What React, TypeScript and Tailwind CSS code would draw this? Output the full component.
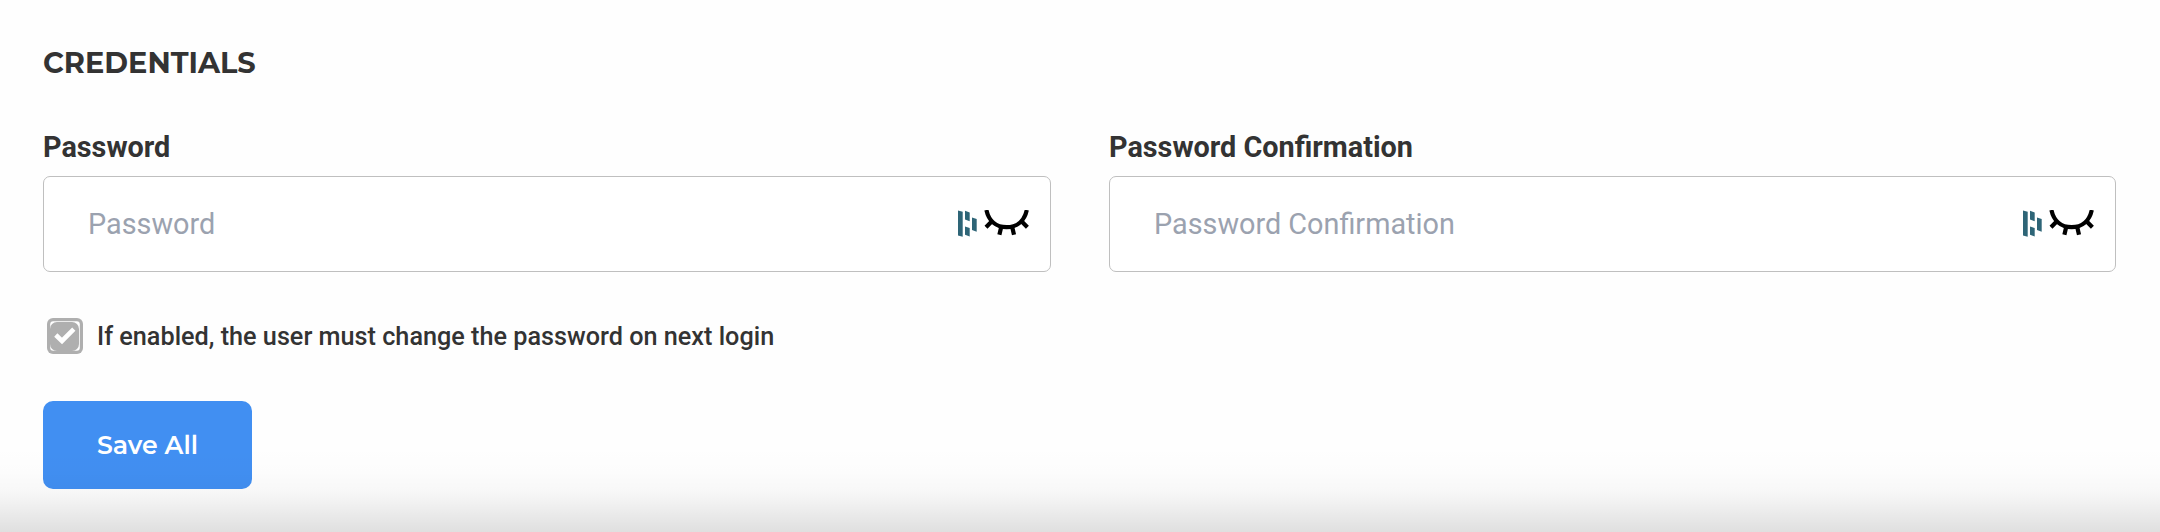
import { useState } from "react";

function StrengthMark() {
  return (
    <svg width="20" height="28" viewBox="0 0 20 28" fill="#2e6577" aria-hidden="true">
      <path d="M0 .4 4.7 1.8v25L0 25.5Z" />
      <path d="M7 .8l4.7 1.8v8.6L7 9.4Z" />
      <path d="M7 16.5l4.7 1.6v8.4L7 24.8Z" />
      <path d="M14 7.5l4.7 1.6v12.7L14 20Z" />
    </svg>
  );
}

function ClosedEye() {
  return (
    <svg width="46" height="28" viewBox="0 0 46 28" fill="none" stroke="#000" strokeWidth="4.2" aria-hidden="true">
      <path d="M3.4 0C5.8 11 13.2 17.2 23.6 17.2S41.4 11 43.8 0" />
      <path d="M9.4 10.8 3 17.2M18.2 17 16.4 24.7M29.2 17 31 24.7M38 10.8 44.4 17.2" />
    </svg>
  );
}

function CheckMark() {
  return (
    <svg width="36" height="36" viewBox="0 0 36 36" fill="none" aria-hidden="true">
      <rect width="36" height="36" rx="6" fill="#afafaf" />
      <rect x="3.2" y="3.2" width="29.6" height="29.6" rx="3" fill="#fff" />
      <rect x="3" y="4" width="29" height="29" rx="7" fill="#afafaf" />
      <path d="M8.8 17 15 23 26.8 11.2" stroke="#fff" strokeWidth="4.6" />
    </svg>
  );
}

function PasswordField({ label }: { label: string }) {
  const [visible, setVisible] = useState(false);
  return (
    <label className="flex flex-col">
      <span className="h-[46px] text-[28.8px] leading-[34px] font-bold text-[#333] whitespace-nowrap">
        {label}
      </span>
      <span className="flex h-24 items-center rounded-[7px] border border-[#bfbfbf] bg-white pr-[21px] pl-[44px]">
        <input
          type={visible ? "text" : "password"}
          placeholder={label}
          className="min-w-0 flex-1 bg-transparent text-[28.8px] leading-[34px] text-[#333] outline-none placeholder:text-[#9ba2af]"
        />
        <StrengthMark />
        <button type="button" className="ml-[5px]" onClick={() => setVisible(!visible)}>
          <ClosedEye />
        </button>
      </span>
    </label>
  );
}

export default function App() {
  return (
    <main className="relative flex h-[532px] w-full flex-col items-start overflow-hidden bg-[#fefefe] pt-[46px] pr-[44px] pl-[43px] font-[Roboto,sans-serif]">
      <h2 className="h-[84px] font-[Montserrat,Inter,sans-serif] text-[28.8px] leading-[34px] font-bold text-[#333]">
        CREDENTIALS
      </h2>
      <div className="grid w-full grid-cols-[1008fr_1007fr] gap-[58px]">
        <PasswordField label="Password" />
        <PasswordField label="Password Confirmation" />
      </div>
      <div className="mt-[46px] ml-1 flex h-9 items-center gap-[14px]">
        <CheckMark />
        <span className="pt-0.5 text-[25.23px] leading-9 font-medium text-[#333] whitespace-nowrap">
          If enabled, the user must change the password on next login
        </span>
      </div>
      <button
        type="button"
        className="mt-[47px] h-[88px] w-[209px] rounded-[10px] bg-[#418ff2] pt-0.5 font-[Montserrat,Inter,sans-serif] text-[25.2px] font-semibold text-white"
      >
        Save All
      </button>
      <div className="pointer-events-none absolute inset-x-0 bottom-0 h-[86px] bg-[linear-gradient(to_bottom,rgba(0,0,0,0)_0%,rgba(0,0,0,0.009)_30%,rgba(0,0,0,0.024)_50%,rgba(0,0,0,0.05)_66%,rgba(0,0,0,0.12)_100%)]" />
    </main>
  );
}
